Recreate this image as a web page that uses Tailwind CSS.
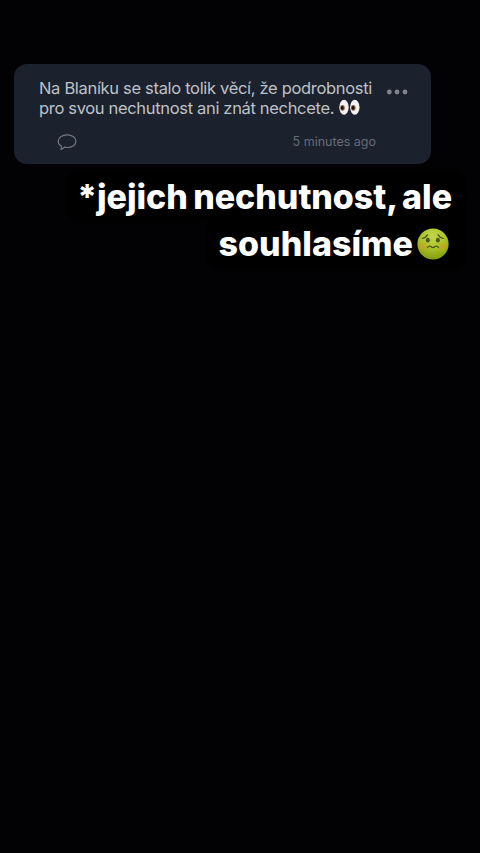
<!DOCTYPE html>
<html lang="cs">
<head>
<meta charset="utf-8">
<title>Story</title>
<script src="https://cdn.jsdelivr.net/npm/@tailwindcss/browser@4"></script>
</head>
<body class="bg-[#020204]">
<main class="h-[853px] w-[480px] overflow-hidden bg-[#020204] pt-16 font-['Inter','Liberation_Sans',sans-serif]">
  <article class="ml-3.5 flex h-[100px] w-[417px] flex-col rounded-[13px] bg-[#1b212d] pl-[25px] pt-3.5">
    <div class="flex">
      <div class="w-[347px] whitespace-nowrap text-[16.5px] leading-5 text-[#bfc1c8]">
        <p class="tracking-[-0.32px]">Na Blaníku se stalo tolik věcí, že podrobnosti</p>
        <p class="flex items-center tracking-[-0.33px]">pro svou nechutnost ani znát nechcete.
          <svg class="mb-0.5 ml-[5px] h-[17px] w-[21px]" viewBox="0 0 21 17" role="img" aria-label="👀">
            <ellipse cx="5" cy="8.2" rx="4.7" ry="7.5" fill="#f3f1ef"/>
            <ellipse cx="15.8" cy="8.2" rx="4.7" ry="7.5" fill="#f3f1ef"/>
            <ellipse cx="3.5" cy="8.8" rx="2.3" ry="2.9" fill="#8c6044"/>
            <ellipse cx="14.3" cy="8.8" rx="2.3" ry="2.9" fill="#8c6044"/>
            <ellipse cx="3.3" cy="8.8" rx="1.4" ry="1.9" fill="#17100e"/>
            <ellipse cx="14.1" cy="8.8" rx="1.4" ry="1.9" fill="#17100e"/>
          </svg>
        </p>
      </div>
      <svg class="mt-[11px] h-[6px] w-[22px]" viewBox="0 0 22 6" fill="#81848d">
        <circle cx="3.3" cy="3" r="2.4"/><circle cx="11" cy="3" r="2.4"/><circle cx="19" cy="3" r="2.4"/>
      </svg>
    </div>
    <div class="mt-[14px] flex items-center justify-between pl-[18px] pr-[55px]">
      <svg class="h-[18px] w-5" viewBox="0 0 20 18" fill="none" stroke="#737883" stroke-width="1.2" stroke-linejoin="round">
        <path d="M4.2 13.1C2.2 11.9 1.2 10.2 1.2 8.2C1.2 4.5 4.9 1.9 10.1 1.9S19 4.5 19 8.2S15.3 14.5 10.1 14.5C9.2 14.5 8.3 14.4 7.5 14.2C6.5 15.3 5.3 16.1 4 16.3C4.5 15.2 4.6 14.1 4.2 13.1Z"/>
      </svg>
      <time class="whitespace-nowrap text-[12.5px] leading-5 text-[#676b76]">5 minutes ago</time>
    </div>
  </article>
  <section class="ml-[66px] mt-[7px] flex w-[401px] flex-col items-end whitespace-nowrap text-[34px] font-extrabold leading-[46px] text-white">
    <p class="flex h-[50px] w-full items-center justify-end rounded-t-xl rounded-bl-xl bg-black pr-[15px] pt-[2px] tracking-[-0.05px] [word-spacing:-2px]">*jejich nechutnost, ale</p>
    <p class="flex h-[48px] w-[261px] items-center justify-end rounded-b-xl bg-black pb-[3px] pr-[18px] tracking-[0px]">souhlasíme
      <svg class="ml-1 h-8 w-8 shrink-0" viewBox="0 0 32 32" role="img" aria-label="🤢">
        <defs>
          <radialGradient id="skin" cx=".5" cy=".25" r=".78"><stop offset="0" stop-color="#c3d64b"/><stop offset=".55" stop-color="#a8c126"/><stop offset="1" stop-color="#7d980f"/></radialGradient>
          <radialGradient id="cheek"><stop stop-color="#d49b20" stop-opacity=".8"/><stop offset="1" stop-color="#d49b20" stop-opacity="0"/></radialGradient>
        </defs>
        <circle cx="16" cy="16" r="15.6" fill="url(#skin)"/>
        <circle cx="6.5" cy="18.5" r="5.5" fill="url(#cheek)"/><circle cx="25.5" cy="18.5" r="5.5" fill="url(#cheek)"/>
        <ellipse cx="10.8" cy="12.2" rx="2" ry="2.4" fill="#4c5916"/><ellipse cx="20.9" cy="12.2" rx="2" ry="2.4" fill="#4c5916"/>
        <path d="M5.5 10.3C7.9 9.9 9.6 8.7 10.5 6.9M21.1 6.9C22 8.7 23.7 9.9 26.1 10.3M10.4 19.6C12 17.8 13.2 17.9 14.2 18.8C15.4 19.9 16.6 19.9 17.7 18.8C18.8 17.8 20.1 17.8 21.5 19.6" fill="none" stroke="#4c5916" stroke-width="1.3" stroke-linecap="round"/>
      </svg>
    </p>
  </section>
</main>
</body>
</html>
